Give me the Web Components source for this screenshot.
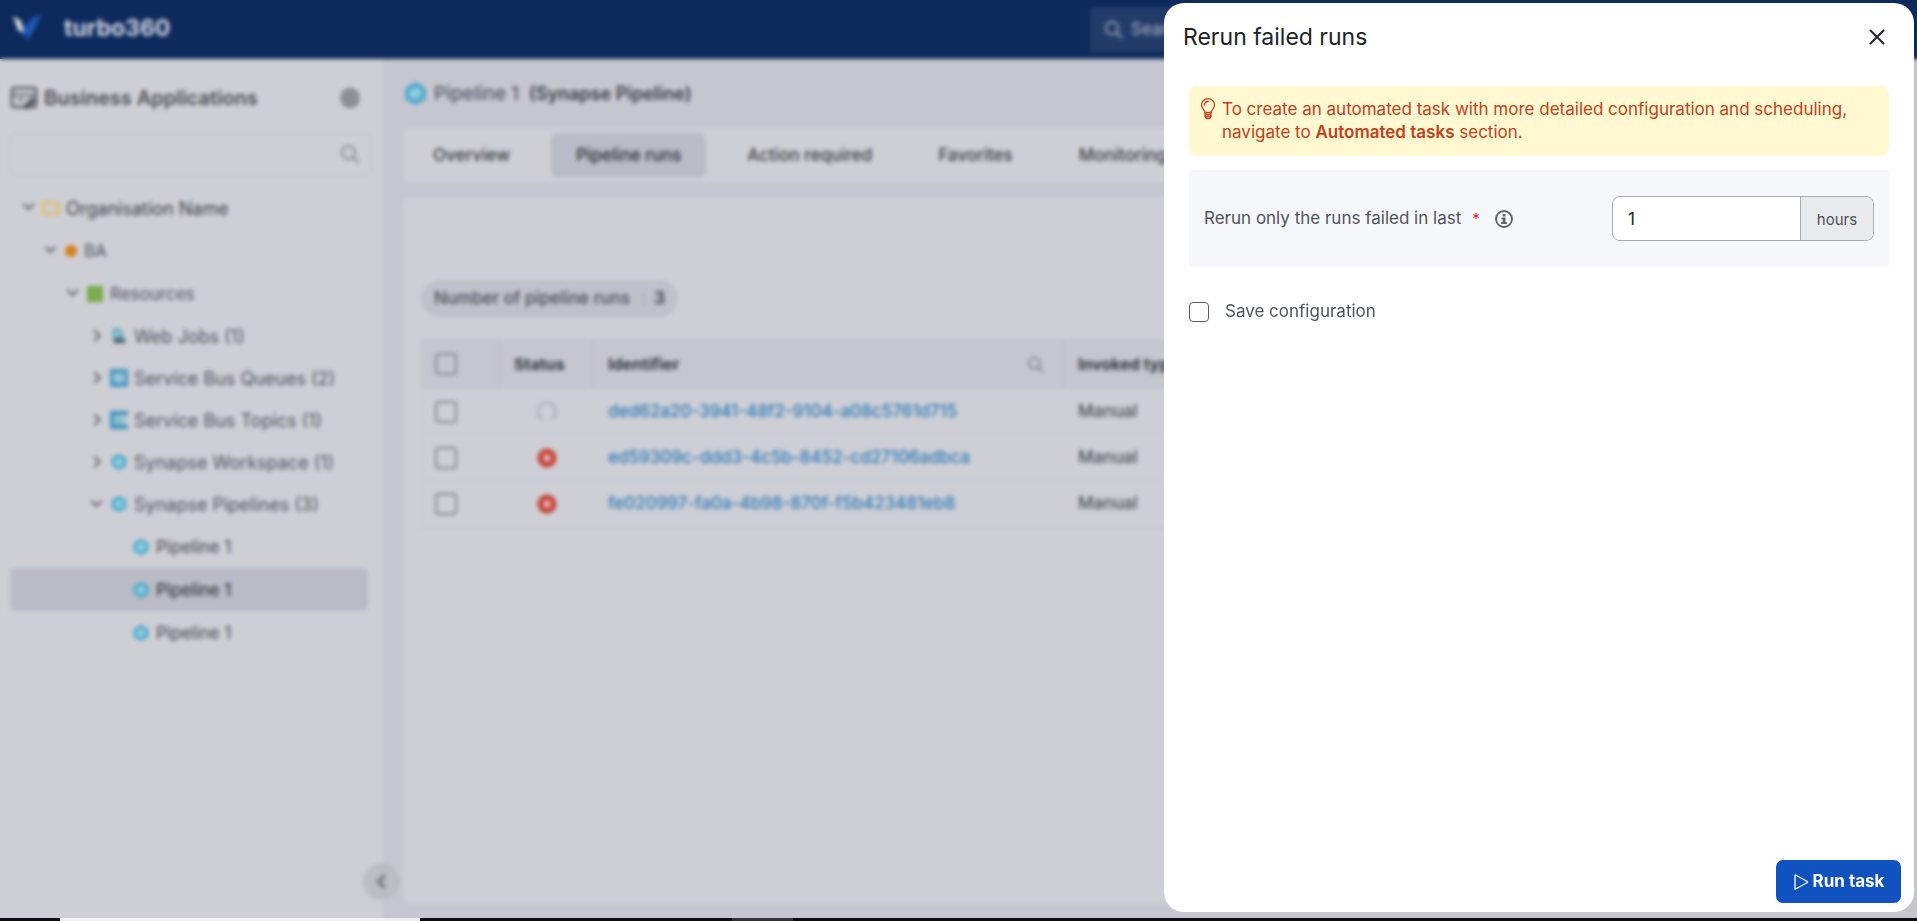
<!DOCTYPE html>
<html lang="en">
<head>
<meta charset="utf-8">
<title>turbo360 - Rerun failed runs</title>
<style>
html, body { margin: 0; height: 100%; }
body { font-family: Inter, "Open Sans", sans-serif; font-size: 17px; line-height: 23px; color: #2b2c31; background: #0c0c10; overflow: hidden; }
</style>
</head>
<body>
<t360-desktop></t360-desktop>
<script>
const BASE = `*, *::before, *::after { box-sizing: border-box; }
button, input { font: inherit; color: inherit; }
button { border: 0; background: none; padding: 0; cursor: pointer; }
a { color: inherit; text-decoration: none; }
svg { display: block; flex: none; }
input[type=checkbox] { appearance: none; margin: 0; display: block; flex: none; background: transparent; }`;

function define(name, markup, setup) {
  const template = document.createElement('template');
  template.innerHTML = markup.replace('<style>', '<style>' + BASE);
  customElements.define(name, class extends HTMLElement {
    constructor() {
      super();
      this.attachShadow({ mode: 'open' }).append(template.content.cloneNode(true));
    }
    connectedCallback() { if (setup) setup(this, this.shadowRoot); }
  });
}

const SYNAPSE = '<path d="M10 1l8 4.500v9L10 19l-8-4.500v-9z" fill="#3f9fc9"/><path d="M10 4l5.500 3v6L10 16l-5.500-3V7z" fill="#78c4dc"/><path d="M7 12.500c1-3 3-2 6-5M7 9.500l2 2" stroke="#b8dfdc" stroke-width="1.600" fill="none"/>';
const ICONS = {
  search: ['0 0 20 20', '<circle cx="8.500" cy="8.500" r="6.500" fill="none" stroke="currentColor" stroke-width="1.700"/><path d="M13.300 13.300L18.500 18.500" stroke="currentColor" stroke-width="1.700" stroke-linecap="round"/>'],
  down: ['0 0 20 20', '<path d="M3 5l7 7 7-7" fill="none" stroke="currentColor" stroke-width="3"/>'],
  right: ['0 0 20 20', '<path d="M7 2l7 7-7 7" fill="none" stroke="currentColor" stroke-width="3"/>'],
  left: ['0 0 20 20', '<path d="M14 2.500L6.500 10l7.500 7.500" fill="none" stroke="currentColor" stroke-width="4"/>'],
  folder: ['0 0 20 20', '<path d="M1.500 3.500h6l2 2h9v11h-17z" fill="none" stroke="#dfbd5c" stroke-width="2.500" stroke-linejoin="round"/>'],
  dot: ['0 0 14 14', '<circle cx="7" cy="7" r="6" fill="#d67d17"/>'],
  resources: ['0 0 18 18', '<rect x="1" y="1" width="16" height="16" rx="1" fill="#74a945"/><path d="M1 6.500h16M1 11.500h16M6.500 1v16M11.500 1v16" stroke="#82b357" stroke-width="1"/>'],
  webjobs: ['0 0 20 20', '<path d="M3 1h8l4 4v11H3z" fill="#71a9be"/><path d="M11 1v4h4" fill="#b5d4dc"/><path d="M5 12h10l3 6H4z" fill="#4c6674"/><circle cx="8" cy="8" r="3" fill="#8fcbd6"/>'],
  queues: ['0 0 20 20', '<path d="M0 0h20v20H0z" fill="#4a93c2"/><path d="M4 5h12v10H4z" fill="#a9cddc"/><path d="M8 5v10M12 5v10" stroke="#74b7cf" stroke-width="1.500"/>'],
  topics: ['0 0 20 20', '<path d="M0 0h20v5H0zM0 15h20v5H0zM0 5h4v10H0z" fill="#3e8fc0"/><path d="M5 7h8v2h5v3h-5v2H5z" fill="#79bcc9"/>'],
  synapse: ['0 0 20 20', SYNAPSE],
  app: ['0 0 28 24', '<rect x="2" y="2" width="24" height="19" rx="2" fill="none" stroke="currentColor" stroke-width="2.400"/><path d="M2 9h24M8 14h5" stroke="currentColor" stroke-width="2"/><path d="M14 19l8-8 4 4-8 8h-4z" fill="currentColor"/>'],
  gear: ['0 0 22 22', '<path d="M11 0l3 2 4 1 1 4 2 4-2 4-1 4-4 1-3 2-3-2-4-1-1-4-2-4 2-4 1-4 4-1z" fill="#94969c"/><circle cx="11" cy="11" r="8.500" fill="none" stroke="#7c7e84" stroke-width="2"/><circle cx="11" cy="11" r="3" fill="none" stroke="#808288" stroke-width="1.500"/>'],
  failed: ['0 0 20 20', '<circle cx="10" cy="10" r="9.500" fill="#c83f37"/><path d="M7 7l6 6M13 7l-6 6" stroke="#e7d0d2" stroke-width="2.600"/>'],
  running: ['0 0 20 20', '<path d="M5.500 17.500A9 9 0 1 1 14.500 17.500" fill="none" stroke="#a6a4bb" stroke-width="2"/>'],
  logo: ['0 0 30 30', '<path d="M1 3l8 5 4 13-7-4z" fill="#dadde4"/><path d="M29 1L19 6 11 17l4 11 8-12z" fill="#1c56b4"/>'],
  close: ['0 0 16 16', '<path d="M1.500 1.500l13 13M14.500 1.500l-13 13" stroke="#26272b" stroke-width="2.100" stroke-linecap="round"/>'],
  bulb: ['0 0 16 22', '<g fill="none" stroke="#c2411c" stroke-width="1.300" stroke-linecap="round" stroke-linejoin="round"><path d="M5 14.500C4.600 12 1.500 10.500 1.500 7a6.500 6.300 0 0 1 13 0c0 3.500-3.100 5-3.500 7.500z"/><path d="M5 14.500v4l1.200 2h3.600l1.200-2v-4M5 16.500h6M5 18.500h6M4.300 7A3.700 3.500 0 0 1 8 3.500"/></g>'],
  info: ['0 0 18 18', '<circle cx="9" cy="9" r="8" fill="none" stroke="#5d6066" stroke-width="1.800"/><rect x="7.700" y="4" width="2.800" height="2.500" fill="#5d6066"/><path d="M6.500 7.500h4v4.700h1.500V14h-6v-1.800h1.700V9.300H6.500z" fill="#5d6066"/>'],
  play: ['0 0 16 16', '<path d="M2 1.300v13.400c0 .3.300.5.600.3L14.300 8.500c.4-.2.400-.8 0-1L2.600 1c-.3-.2-.6 0-.6.300z" fill="none" stroke="#fff" stroke-width="1.300"/>']
};

define('t360-icon', `<style>:host { display: block; flex: none; }</style><div></div>`, (el, root) => {
  const [box, body] = ICONS[el.getAttribute('name')];
  const w = el.getAttribute('width') || el.getAttribute('size') || 18;
  const h = el.getAttribute('size') || 18;
  root.querySelector('div').innerHTML = `<svg viewBox="${box}" width="${w}" height="${h}" aria-hidden="true">${body}</svg>`;
});

define('t360-topbar', `<style>
:host { display: flex; align-items: center; justify-content: space-between; height: 59px; padding: 0 12px; background: #0d2a5c; color: #cfd5e1; }
.brand { display: flex; align-items: center; gap: 22px; font-size: 23px; line-height: 28px; font-weight: 700; padding-bottom: 4px; }
.find { display: flex; align-items: center; gap: 8px; width: 420px; height: 45px; margin-right: 395px; padding: 0 14px; border-radius: 4px; background: #233b68; color: #aab4c6; text-align: left; }
</style>
<a class="brand" href="#"><t360-icon name="logo" size="30"></t360-icon>turbo360</a>
<button class="find"><t360-icon name="search" size="19"></t360-icon>Search</button>`);

define('t360-tree-item', `<style>
:host { display: block; }
a { display: flex; align-items: center; height: 43px; padding-left: calc(7px + var(--level) * 22px); border-radius: 6px; font-size: 17px; color: #515261; white-space: nowrap; }
:host([kind=type]) a { height: 42px; font-size: 18px; }
:host([kind=type]) a, :host([kind=leaf]) a { padding-left: calc(9px + var(--level) * 22px); }
:host([kind=root]) a { font-size: 18px; color: #3f4046; }
:host([kind=leaf]) a { color: #44454c; }
:host([selected]) a { background: #b9bbc6; color: #25262c; }
.chevron { display: flex; justify-content: center; width: 22px; margin-right: 3px; color: #63656b; }
.text { margin-left: 6px; padding-top: 1px; }
</style>
<a href="#"><span class="chevron"></span><span class="icon"></span><span class="text"><slot></slot></span></a>`, (el, root) => {
  el.style.setProperty('--level', el.getAttribute('level'));
  const open = el.getAttribute('chevron');
  if (open) root.querySelector('.chevron').innerHTML = `<t360-icon name="${open}" size="15"></t360-icon>`;
  const icon = el.getAttribute('icon');
  root.querySelector('.icon').innerHTML = `<t360-icon name="${icon}" size="${icon === 'dot' ? 14 : 18}"></t360-icon>`;
});

define('t360-sidebar', `<style>
:host { display: flex; flex-direction: column; position: relative; width: 383px; flex: none; padding: 24px 11px 0 10px; background: #cecfd5; }
header { display: flex; align-items: center; height: 30px; gap: 6px; color: #55575d; }
h2 { flex: 1; margin: 0; font-size: 20px; line-height: 26px; font-weight: 600; color: #4a4b51; }
header button { margin-right: 11px; }
.search { display: flex; align-items: center; height: 43px; margin-top: 19px; padding-right: 11px; border: 1px solid #c2c3c9; border-radius: 6px; color: #797b81; }
.search input { flex: 1; min-width: 0; height: 40px; border: 0; outline: 0; background: none; }
nav { margin: 11px 4px 0 0; }
.collapse { position: absolute; right: -17px; bottom: 18px; display: flex; align-items: center; justify-content: center; width: 37px; height: 37px; border-radius: 50%; background: #bcbdc3; color: #75777c; z-index: 1; }
</style>
<header><t360-icon name="app" width="28" size="24"></t360-icon><h2>Business Applications</h2><button aria-label="Settings"><t360-icon name="gear" size="22"></t360-icon></button></header>
<label class="search"><input type="search" aria-label="Search resources"><t360-icon name="search" size="20"></t360-icon></label>
<nav>
<t360-tree-item level="0" kind="root" chevron="down" icon="folder">Organisation Name</t360-tree-item>
<t360-tree-item level="1" chevron="down" icon="dot">BA</t360-tree-item>
<t360-tree-item level="2" chevron="down" icon="resources">Resources</t360-tree-item>
<t360-tree-item level="3" kind="type" chevron="right" icon="webjobs">Web Jobs (1)</t360-tree-item>
<t360-tree-item level="3" kind="type" chevron="right" icon="queues">Service Bus Queues (2)</t360-tree-item>
<t360-tree-item level="3" kind="type" chevron="right" icon="topics">Service Bus Topics (1)</t360-tree-item>
<t360-tree-item level="3" kind="type" chevron="right" icon="synapse">Synapse Workspace (1)</t360-tree-item>
<t360-tree-item level="3" kind="type" chevron="down" icon="synapse">Synapse Pipelines (3)</t360-tree-item>
<t360-tree-item level="4" kind="leaf" icon="synapse">Pipeline 1</t360-tree-item>
<t360-tree-item level="4" kind="leaf" icon="synapse" selected>Pipeline 1</t360-tree-item>
<t360-tree-item level="4" kind="leaf" icon="synapse">Pipeline 1</t360-tree-item>
</nav>
<button class="collapse" aria-label="Collapse sidebar"><t360-icon name="left" size="17"></t360-icon></button>`);

define('t360-runs-table', `<style>
:host { display: block; }
table { width: 100%; table-layout: fixed; border-collapse: separate; border-spacing: 0; border: 1px solid #c7c8cf; }
th, td { height: 46px; padding: 0 14px; text-align: left; vertical-align: middle; border-bottom: 1px solid #c7c8cf; white-space: nowrap; }
th:first-child, td:first-child { padding-left: 13px; }
th { height: 49px; background: #c5c6cf; border-right: 2px solid #bbbcc6; font-size: 16px; font-weight: 700; color: #36373e; }
td { color: #4f5057; font-weight: 500; }
td a { color: #2f7bb8; font-size: 17px; font-weight: 500; }
input[type=checkbox] { width: 22px; height: 22px; border: 2px solid #84868c; border-radius: 4px; }
.find { display: flex; align-items: center; justify-content: space-between; padding-right: 4px; }
.find button { color: #77797f; }
td.status { padding: 0 37px; }
</style>
<table>
<colgroup><col style="width:78px"><col style="width:94px"><col style="width:470px"><col></colgroup>
<thead><tr><th><input type="checkbox" aria-label="Select all runs"></th><th>Status</th><th><div class="find">Identifier<button aria-label="Search identifier"><t360-icon name="search" size="17"></t360-icon></button></div></th><th>Invoked type</th></tr></thead>
<tbody></tbody></table>`, (el, root) => {
  const runs = [['running', 'ded62a20-3941-48f2-9104-a08c5761d715'], ['failed', 'ed59309c-ddd3-4c5b-8452-cd27106adbca'], ['failed', 'fe020997-fa0a-4b98-870f-f5b423481eb8']];
  root.querySelector('tbody').innerHTML = runs.map(([status, id]) => `<tr><td><input type="checkbox" aria-label="Select run"></td><td class="status"><t360-icon name="${status}" size="20"></t360-icon></td><td><a href="#">${id}</a></td><td>Manual</td></tr>`).join('');
});

define('t360-main', `<style>
:host { display: flex; flex-direction: column; flex: 1; min-width: 0; padding: 17px 20px 15px; background: #c6c6cf; }
h1 { display: flex; align-items: center; gap: 6px; height: 34px; margin: 0 0 18px; font-size: 18px; font-weight: 600; color: #3b3c43; }
h1 .name { font-size: 19px; font-weight: 500; color: #55566a; margin-right: 4px; }
.tabs, .card { background: #cecfd5; border-radius: 8px; }
.tabs { display: flex; align-items: center; gap: 16px; height: 54px; padding: 0 5px; margin-bottom: 15px; }
.tabs button { height: 44px; padding: 0 25px; border-radius: 6px; font-weight: 500; color: #3c3d43; white-space: nowrap; }
.tabs .on { background: #b9bcc6; color: #2a2b31; }
.card { flex: 1; padding: 83px 19px 0 18px; }
.count { display: inline-flex; align-items: center; height: 37px; padding: 0 13px; margin-bottom: 22px; border-radius: 19px; background: #c0c1c8; color: #4a4b5c; font-weight: 500; }
.count i { margin: 0 8px 0 11px; font-style: normal; color: #9a9ba6; }
.count b { font-weight: 700; }
</style>
<h1><t360-icon name="synapse" size="25"></t360-icon><span class="name">Pipeline 1</span>(Synapse Pipeline)</h1>
<div class="tabs"><button>Overview</button><button class="on">Pipeline runs</button><button>Action required</button><button>Favorites</button><button>Monitoring</button></div>
<section class="card"><div class="count">Number of pipeline runs<i>:</i><b>3</b></div><t360-runs-table></t360-runs-table></section>`);

define('t360-rerun-panel', `<style>
:host { display: flex; flex-direction: column; width: 750px; max-width: 100%; background: #fff; border-radius: 20px; color: #4f535e; }
header { display: flex; align-items: center; justify-content: space-between; height: 67px; padding: 0 29px 0 19px; }
h2 { margin: 0; font-size: 23px; line-height: 30px; font-weight: 400; color: #212226; }
main { flex: 1; padding: 16px 25px 0; }
.tip { display: flex; gap: 6px; min-height: 70px; margin: 0 0 14px; padding: 12px 12px 12px 11px; background: #fff8d1; border-radius: 8px; color: #c2411c; }
.tip a { font-weight: 600; }
.row { display: flex; align-items: center; justify-content: space-between; height: 97px; padding: 0 15px; background: #f6f7fa; border-radius: 4px; }
.row label, .name { display: flex; align-items: center; }
.row em { margin: 0 15px 0 11px; font-style: normal; font-size: 15px; color: #e5232f; }
.field { display: flex; width: 262px; height: 45px; border: 1px solid #a9adb3; border-radius: 8px; overflow: hidden; background: #fff; }
.field input { flex: 1; min-width: 0; padding: 2px 15px 0; border: 0; outline: 0; color: #222327; }
.field span { display: flex; align-items: center; justify-content: center; width: 73px; padding-top: 2px; border-left: 1px solid #a9adb3; background: #e8eaed; font-size: 15px; color: #4d5056; }
.save { display: flex; align-items: center; gap: 16px; margin-top: 33px; width: max-content; }
.save input { width: 20px; height: 20px; border: 1px solid #55585e; border-radius: 4px; }
footer { display: flex; justify-content: flex-end; padding: 0 13px 9px; }
.run { display: flex; align-items: center; justify-content: center; gap: 4px; width: 125px; height: 43px; background: #1053c0; color: #fff; border-radius: 7px; font-weight: 700; }
</style>
<header><h2>Rerun failed runs</h2><button aria-label="Close"><t360-icon name="close" size="16"></t360-icon></button></header>
<main>
<div class="tip"><t360-icon name="bulb" width="16" size="22"></t360-icon><div><div>To create an automated task with more detailed configuration and scheduling,</div><div>navigate to <a href="#">Automated tasks</a> section.</div></div></div>
<div class="row"><div class="name"><label for="hours">Rerun only the runs failed in last<em>*</em></label><t360-icon name="info" size="18"></t360-icon></div>
<div class="field"><input id="hours" type="text" inputmode="numeric" value="1"><span>hours</span></div></div>
<label class="save"><input type="checkbox">Save configuration</label>
</main>
<footer><button class="run"><t360-icon name="play" size="16"></t360-icon>Run task</button></footer>`);

define('t360-app', `<style>
:host { display: flex; flex-direction: column; position: relative; flex: 1; min-height: 0; overflow: hidden; }
.body { display: flex; flex: 1; min-height: 0; }
.backdrop { position: absolute; inset: 0; z-index: 2; display: flex; justify-content: flex-end; padding: 3px 3px 6px; backdrop-filter: blur(2px); }
</style>
<t360-topbar></t360-topbar><div class="body"><t360-sidebar></t360-sidebar><t360-main></t360-main></div>
<div class="backdrop"><t360-rerun-panel role="dialog" aria-label="Rerun failed runs"></t360-rerun-panel></div>`);

define('t360-desktop', `<style>
:host { display: flex; flex-direction: column; height: 100vh; }
.edge { display: flex; height: 3px; background: #0c0c10; }
.light { width: 360px; margin-left: 60px; background: #f1f1f3; }
.grey { width: 61px; margin-left: 312px; background: #343438; }
</style>
<t360-app></t360-app><div class="edge"><div class="light"></div><div class="grey"></div></div>`);
</script>
</body>
</html>
